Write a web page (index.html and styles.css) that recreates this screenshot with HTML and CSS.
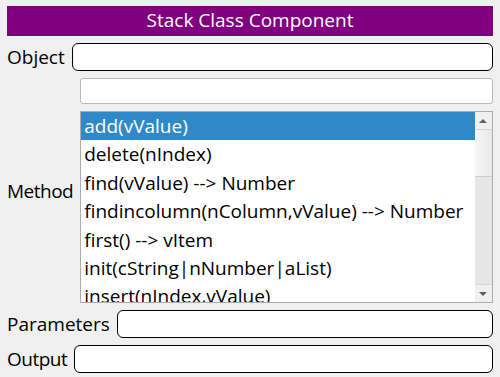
FILE: index.html
```html
<!DOCTYPE html>
<html lang="en">
<head>
  <meta charset="UTF-8" />
  <title>Stack Class Component</title>
  <link rel="stylesheet" href="styles.css">
</head>
<body>

  <div class="title">Stack Class Component</div>

  <div class="row">
    <label class="label">Object</label>
    <input type="text" class="field" />
  </div>

  <div class="row">
    <label class="label tight">Method</label>
    <div class="method-box">
      <input type="text" class="filter" />
      <div class="list">
        <ul class="items">
          <li class="selected">add(vValue)</li>
          <li>delete(nIndex)</li>
          <li>find(vValue) --&gt; Number</li>
          <li>findincolumn(nColumn,vValue) --&gt; Number</li>
          <li>first() --&gt; vItem</li>
          <li>init(cString|nNumber|aList)</li>
          <li>insert(nIndex,vValue)</li>
        </ul>
        <div class="scrollbar">
          <div class="arrow up"></div>
          <div class="thumb"></div>
          <div class="track"></div>
          <div class="arrow down"></div>
        </div>
      </div>
    </div>
  </div>

  <div class="row">
    <label class="label">Parameters</label>
    <input type="text" class="field" />
  </div>

  <div class="row">
    <label class="label tight">Output</label>
    <input type="text" class="field" />
  </div>

</body>
</html>
```

FILE: styles.css
```css
body {
  margin: 0;
  padding: 6px 7px;
  background: #f0f0f0;
  font-family: "Open Sans", "Noto Sans", sans-serif;
  font-size: 19px;
  color: #000;
}
.title {
  height: 30px;
  line-height: 29px;
  background: #800080;
  color: white;
  text-align: center;
}
.row {
  display: flex;
  align-items: center;
  gap: 7px;
  margin-top: 7px;
}
.label {
  line-height: 26px;
}
.label.tight {
  letter-spacing: -0.5px;
}
.field {
  flex: 1;
  height: 28px;
  box-sizing: border-box;
  border: 1px solid #000;
  border-radius: 6px;
  background: white;
  margin: 0;
}
.method-box {
  flex: 1;
  display: flex;
  flex-direction: column;
  gap: 7px;
}
.filter {
  height: 26px;
  box-sizing: border-box;
  border: 1px solid #b9b9b9;
  border-radius: 3px;
  background: white;
  margin: 0;
}
.list {
  height: 192px;
  box-sizing: border-box;
  border: 1px solid #acacac;
  background: white;
  display: flex;
  overflow: hidden;
}
.items {
  flex: 1;
  list-style: none;
  margin: 0;
  padding: 0;
}
.items li {
  height: 28.4px;
  line-height: 28px;
  padding-left: 3px;
  white-space: nowrap;
}
.items li.selected {
  background: #2f89c9;
  color: white;
}
.scrollbar {
  width: 17px;
  display: flex;
  flex-direction: column;
  background: #e6e6e6;
}
.arrow {
  height: 17px;
  background: #f0f0f0;
  position: relative;
}
.arrow.up {
  border-bottom: 1px solid #d8d8d8;
}
.arrow.down {
  border-top: 1px solid #d8d8d8;
}
.arrow::after {
  content: "";
  position: absolute;
  left: 4px;
  top: 7px;
  border-left: 4px solid transparent;
  border-right: 4px solid transparent;
}
.arrow.up::after {
  border-bottom: 4px solid #606060;
}
.arrow.down::after {
  border-top: 4px solid #606060;
}
.thumb {
  height: 46px;
  background: linear-gradient(to right, #f6f6f6, #e8e8e8);
  border-bottom: 1px solid #cdcdcd;
}
.track {
  flex: 1;
}
```
